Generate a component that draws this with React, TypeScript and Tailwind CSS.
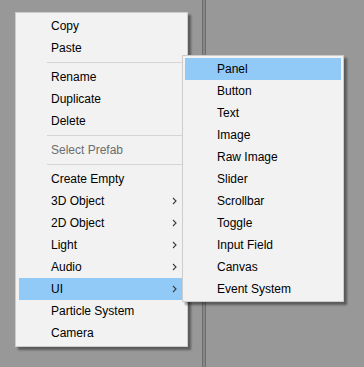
import React from "react";

type Item = { label?: string; sep?: boolean; disabled?: boolean; sub?: boolean; active?: boolean };

const mainItems: Item[] = [
  { label: "Copy" },
  { label: "Paste" },
  { sep: true },
  { label: "Rename" },
  { label: "Duplicate" },
  { label: "Delete" },
  { sep: true },
  { label: "Select Prefab", disabled: true },
  { sep: true },
  { label: "Create Empty" },
  { label: "3D Object", sub: true },
  { label: "2D Object", sub: true },
  { label: "Light", sub: true },
  { label: "Audio", sub: true },
  { label: "UI", sub: true, active: true },
  { label: "Particle System" },
  { label: "Camera" },
];

const subItems: Item[] = [
  { label: "Panel", active: true },
  { label: "Button" },
  { label: "Text" },
  { label: "Image" },
  { label: "Raw Image" },
  { label: "Slider" },
  { label: "Scrollbar" },
  { label: "Toggle" },
  { label: "Input Field" },
  { label: "Canvas" },
  { label: "Event System" },
];

function Chevron() {
  return (
    <svg width="5" height="8" viewBox="0 0 5 8" className="block">
      <path d="M1 1 L4 4 L1 7" fill="none" stroke="#3c3c3c" strokeWidth="1.1" />
    </svg>
  );
}

function Row({ item }: { item: Item }) {
  return (
    <div
      className={
        "flex h-[22px] items-center justify-between pl-[32px] pr-[7px]" +
        (item.active ? " bg-[#91c9f7]" : "")
      }
    >
      <span className={item.disabled ? "text-[#6d6d6d]" : "text-[#000000]"}>{item.label}</span>
      {item.sub ? <Chevron /> : null}
    </div>
  );
}

export default function App() {
  return (
    <div
      className="relative flex h-[367px] w-[364px] overflow-hidden bg-[#989898] text-[12px] leading-[22px]"
      style={{ fontFamily: '"Liberation Sans", Arial, sans-serif' }}
    >
      <div className="w-[202px] shrink-0" />
      <div className="flex h-full w-[4px] shrink-0">
        <div className="w-[1px] bg-[#6e6e6e]" />
        <div className="w-[2px] bg-[#878787]" />
        <div className="w-[1px] bg-[#6e6e6e]" />
      </div>
      <div className="flex-1" />

      {/* main context menu */}
      <div className="absolute left-[15px] top-[12px] w-[173px] border border-[#cccccc] bg-[#f2f2f2] px-[3px] pt-[2px] pb-[2px] shadow-[3px_3px_2px_rgba(0,0,0,0.4)]">
        {mainItems.map((it, i) =>
          it.sep ? (
            <div key={i} className="flex h-[7px] items-center pl-[28px] pr-[2px]">
              <div className="h-[1px] w-full bg-[#d5d5d5]" />
            </div>
          ) : (
            <Row key={i} item={it} />
          )
        )}
      </div>

      {/* UI submenu */}
      <div className="absolute left-[182px] top-[55px] w-[162px] border border-[#cccccc] bg-[#f2f2f2] px-[2px] pt-[2px] pb-[1px] shadow-[3px_3px_2px_rgba(0,0,0,0.4)]">
        {subItems.map((it, i) => (
          <Row key={i} item={it} />
        ))}
      </div>
    </div>
  );
}
